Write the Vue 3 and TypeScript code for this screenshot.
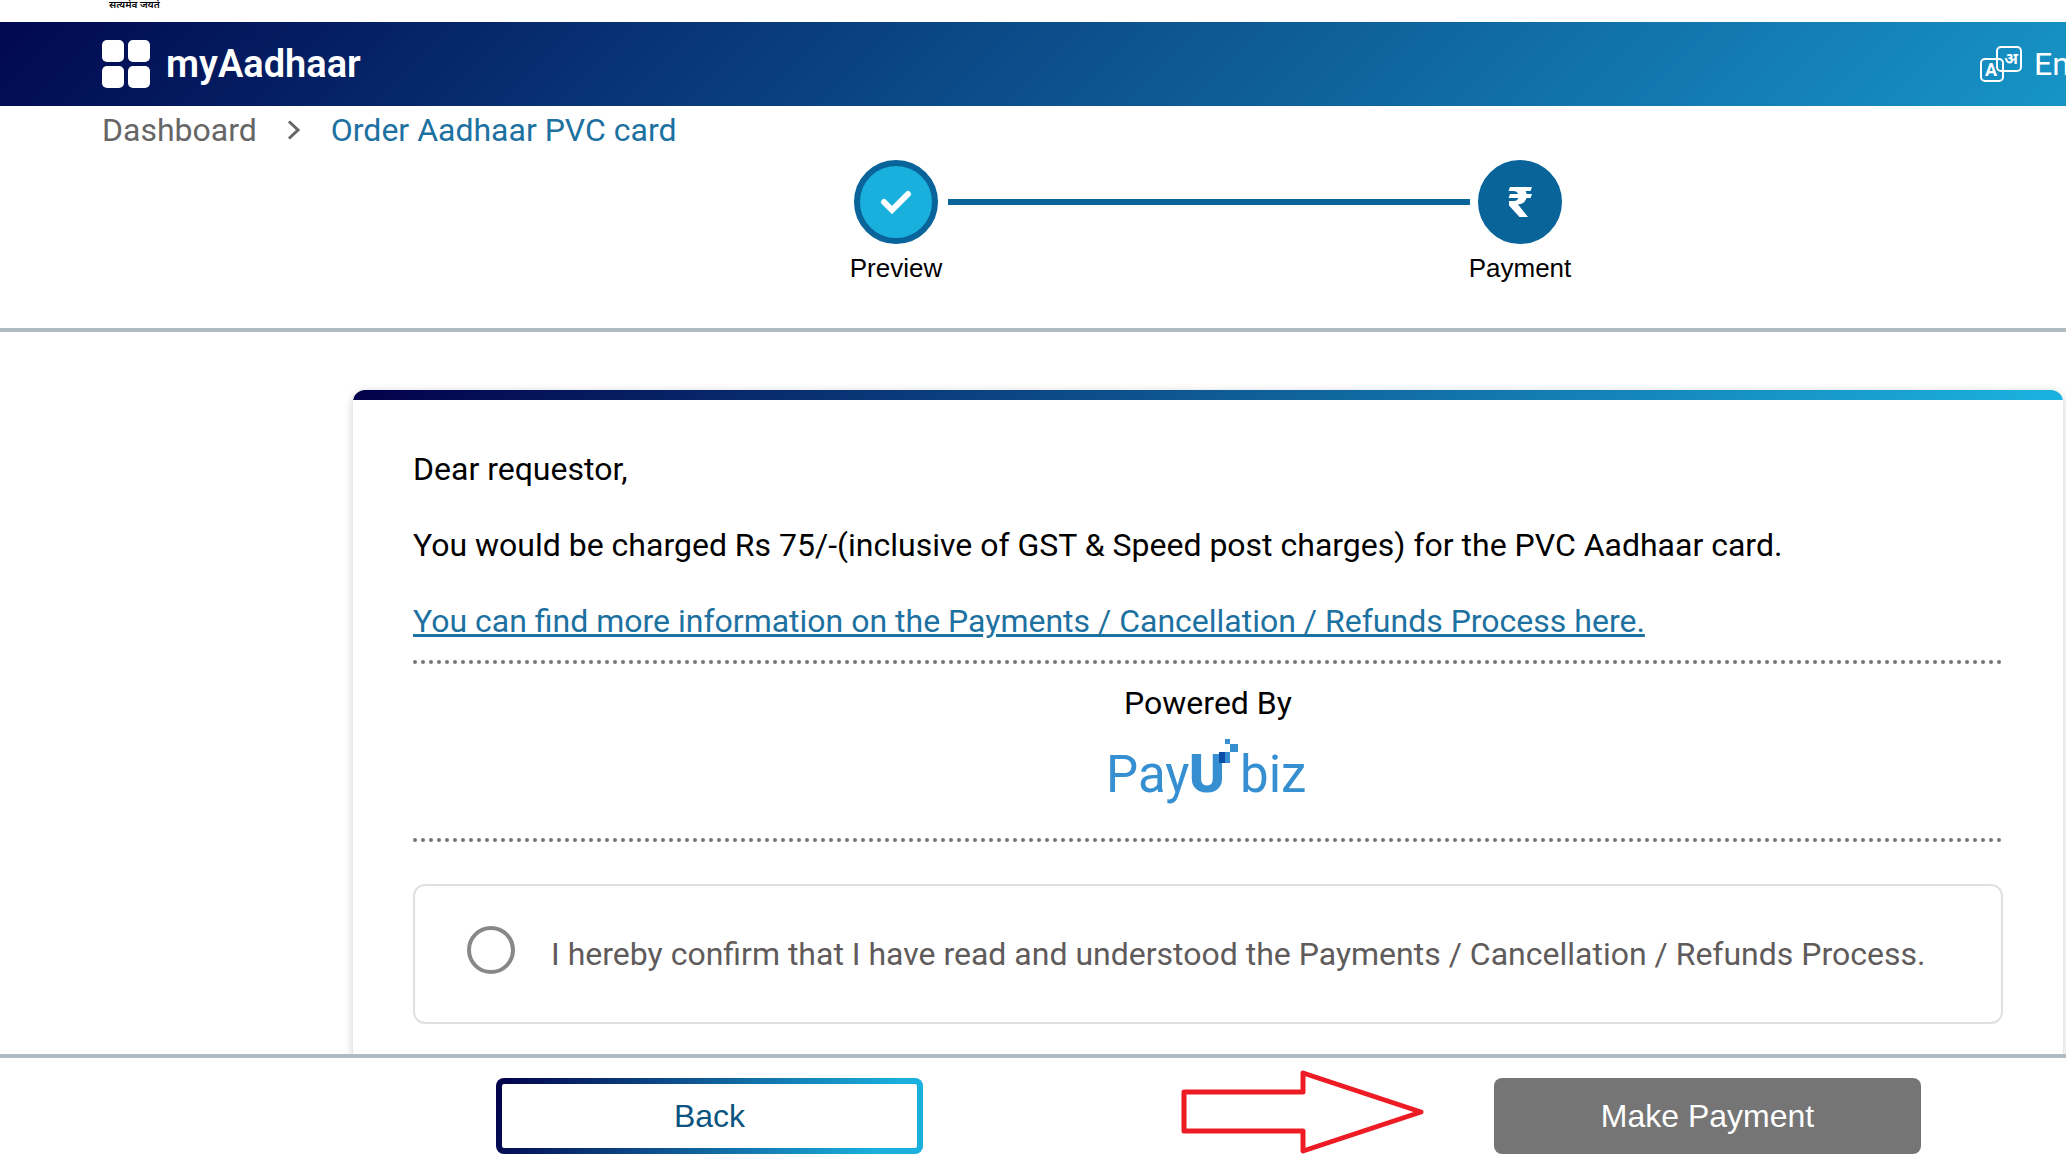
<script setup lang="ts">
import { ref } from 'vue'

const confirmed = ref(false)
const crumbs = { home: 'Dashboard', current: 'Order Aadhaar PVC card' }
</script>

<template>
  <div class="page">
    <div class="emblem"><span>सत्यमेव जयते</span></div>

    <header class="navbar">
      <a class="brand" href="#">
        <svg width="48" height="48" viewBox="0 0 48 48" fill="#fff" aria-hidden="true">
          <rect width="22" height="22" rx="5" />
          <rect x="26" width="22" height="22" rx="5" />
          <rect y="26" width="22" height="22" rx="5" />
          <rect x="26" y="26" width="22" height="22" rx="5" />
        </svg>
        <span>myAadhaar</span>
      </a>
      <button class="language" type="button">
        <svg width="42" height="36" viewBox="0 0 42 36" fill="none" stroke="#fff" stroke-width="2" aria-hidden="true">
          <rect x="17" y="1" width="24" height="24" rx="4" />
          <rect x="1" y="13" width="22" height="22" rx="4" />
          <text class="glyph-latin" x="11" y="30" text-anchor="middle">A</text>
          <text class="glyph-hindi" x="31" y="18" text-anchor="middle">अ</text>
        </svg>
        <span>English</span>
      </button>
    </header>

    <nav class="crumbs" aria-label="Breadcrumb">
      <a class="home" href="#">{{ crumbs.home }}</a>
      <svg width="14" height="20" viewBox="0 0 14 20" fill="none" stroke="#666" stroke-width="3" aria-hidden="true">
        <path d="M2 1.500L11 10L2 18.500" />
      </svg>
      <a class="current" href="#">{{ crumbs.current }}</a>
    </nav>

    <ol class="stepper">
      <li class="step">
        <span class="dot done">
          <svg width="32" height="24" viewBox="0 0 32 24" fill="none" stroke="#fff" stroke-width="6" stroke-linecap="round" aria-hidden="true">
            <path d="M4 12L12 20L28 4" />
          </svg>
        </span>
        <span>Preview</span>
      </li>
      <li class="link" aria-hidden="true"></li>
      <li class="step">
        <span class="dot">
          <svg width="24" height="30" viewBox="0 0 24 30" fill="#fff" aria-hidden="true">
            <path d="M2 0H24L22.500 4H17.500Q18.500 5.500 18.700 7H24L22.500 11H18.500Q17 16.500 10 17.500L20 30H11.500L1 18.500V14H6Q9.500 14 10.300 11H0.500L2 7H10Q9 4 5.500 4H0.500Z" />
          </svg>
        </span>
        <span>Payment</span>
      </li>
    </ol>

    <main class="content">
      <section class="card">
        <p>Dear requestor,</p>
        <p>You would be charged Rs 75/-(inclusive of GST &amp; Speed post charges) for the PVC Aadhaar card.</p>
        <p><a class="info" href="#">You can find more information on the Payments / Cancellation / Refunds Process here.</a></p>
        <div class="gateway">
          <span>Powered By</span>
          <svg class="payu" width="200" height="74" viewBox="0 0 200 74" role="img" aria-label="PayU biz">
            <text x="-2" y="59">Pay</text>
            <text class="bold" x="81" y="59">U</text>
            <text x="132" y="59">biz</text>
            <rect x="111" y="19" width="11" height="11" />
            <rect x="122" y="11" width="8" height="8" />
            <rect x="117" y="6" width="5" height="5" />
            <rect class="deep" x="111" y="19" width="6" height="11" />
          </svg>
        </div>
        <label class="consent">
          <input v-model="confirmed" type="checkbox" />
          <span>I hereby confirm that I have read and understood the Payments / Cancellation / Refunds Process.</span>
        </label>
      </section>
    </main>

    <footer class="actions">
      <button class="back" type="button">Back</button>
      <svg class="arrow" width="244" height="84" viewBox="0 0 244 84" fill="none" stroke="#ed1c24" stroke-width="5" stroke-linejoin="round" aria-hidden="true">
        <path d="M3 22H122V3L240 42L122 81V61H3Z" />
      </svg>
      <button class="pay" type="button">Make Payment</button>
    </footer>
  </div>
</template>

<style>
body {
  margin: 0;
  background: #fff;
}
</style>

<style scoped>
.page {
  display: flex;
  flex-direction: column;
  height: 100vh;
  overflow: hidden;
  font-family: Roboto, "Noto Sans", sans-serif;
  font-size: 32px;
  line-height: 36px;
  color: #000;
}
a {
  color: inherit;
  text-decoration: none;
}
button {
  font: inherit;
  cursor: pointer;
}
.emblem {
  display: flex;
  align-items: flex-end;
  flex: none;
  height: 11px;
  padding: 0 109px 11px;
  overflow: hidden;
  font-size: 10px;
  line-height: 12px;
  font-weight: 600;
  white-space: nowrap;
}
.navbar {
  display: flex;
  flex: none;
  align-items: center;
  justify-content: space-between;
  height: 84px;
  padding-left: 102px;
  background: linear-gradient(135deg, #010850 0%, #1bb0de 120%);
  color: #fff;
}
.brand {
  display: flex;
  align-items: center;
  gap: 16px;
  font-size: 38px;
  font-weight: 600;
}
.language {
  display: flex;
  align-items: center;
  gap: 12px;
  width: 86px;
  padding: 0;
  border: 0;
  background: none;
  color: #fff;
  overflow: hidden;
  white-space: nowrap;
}
.language svg {
  flex: none;
}
.language text {
  fill: #fff;
  stroke: none;
  font-weight: 700;
}
.glyph-latin {
  font-size: 18px;
}
.glyph-hindi {
  font-size: 16px;
}
.crumbs {
  display: flex;
  flex: none;
  align-items: center;
  gap: 30px;
  padding: 6px 102px 0;
}
.crumbs .home {
  color: #666;
}
.crumbs .current,
.info {
  color: #1d71a1;
}
.stepper {
  display: flex;
  flex: none;
  justify-content: center;
  margin: 0;
  padding: 12px 0 44px 350px;
  border-bottom: 4px solid #b0bac1;
  list-style: none;
  font-family: "Liberation Sans", Arial, sans-serif;
  font-size: 26px;
  line-height: 32px;
}
.step {
  display: flex;
  flex-direction: column;
  align-items: center;
  gap: 8px;
  width: 84px;
}
.dot {
  display: flex;
  align-items: center;
  justify-content: center;
  box-sizing: border-box;
  width: 84px;
  height: 84px;
  border: 6px solid #086499;
  border-radius: 50%;
  background: #086499;
}
.dot.done {
  background: #1ab0de;
}
.link {
  width: 522px;
  height: 6px;
  margin: 39px 8px 0 10px;
  background: #086499;
}
.content {
  flex: 1;
  min-height: 0;
  padding: 58px 3px 0 353px;
  overflow: hidden;
}
.card {
  position: relative;
  min-height: 800px;
  box-sizing: border-box;
  padding: 61px 60px;
  border-radius: 12px;
  overflow: hidden;
  box-shadow: 0 2px 10px rgba(0, 0, 0, 0.2);
}
.card::before {
  content: "";
  position: absolute;
  top: 0;
  left: 0;
  right: 0;
  height: 10px;
  background: linear-gradient(135deg, #020049, #1bb3e0);
}
.card p {
  margin: 0 0 40px;
}
.card p:nth-of-type(3) {
  margin-bottom: 21px;
}
.info {
  text-decoration: underline;
}
.gateway {
  display: flex;
  flex-direction: column;
  align-items: center;
  gap: 12px;
  box-sizing: border-box;
  height: 182px;
  padding-top: 21px;
  border-top: 4px dotted #757575;
  border-bottom: 4px dotted #757575;
}
.payu {
  overflow: visible;
  fill: #368fd0;
  font-size: 51px;
}
.payu .bold {
  font-size: 54px;
  font-weight: 900;
}
.payu .deep {
  fill: #094da6;
}
.consent {
  display: flex;
  align-items: center;
  gap: 36px;
  box-sizing: border-box;
  height: 140px;
  margin-top: 42px;
  padding: 0 52px;
  border: 2px solid #e0e0e0;
  border-radius: 12px;
  color: #5f5b5b;
}
.consent input {
  appearance: none;
  flex: none;
  box-sizing: border-box;
  width: 48px;
  height: 48px;
  margin: 0 0 8px;
  border: 4px solid #888;
  border-radius: 50%;
}
.consent input:checked {
  background: #086499;
}
.actions {
  display: flex;
  flex: none;
  align-items: flex-end;
  padding: 12px 145px 17px 496px;
  border-top: 4px solid #b0bac1;
  background: #fff;
  font-family: "Liberation Sans", Arial, sans-serif;
}
.actions button {
  box-sizing: border-box;
  width: 427px;
  height: 76px;
  border-radius: 8px;
}
.back {
  border: 6px solid transparent;
  background: linear-gradient(#fff, #fff) padding-box, linear-gradient(110deg, #020049, #1ab0de 90%) border-box;
  color: #0b5580;
}
.pay {
  border: 0;
  background: #757575;
  color: #fff;
}
.arrow {
  margin: 0 69px 0 auto;
}
</style>
